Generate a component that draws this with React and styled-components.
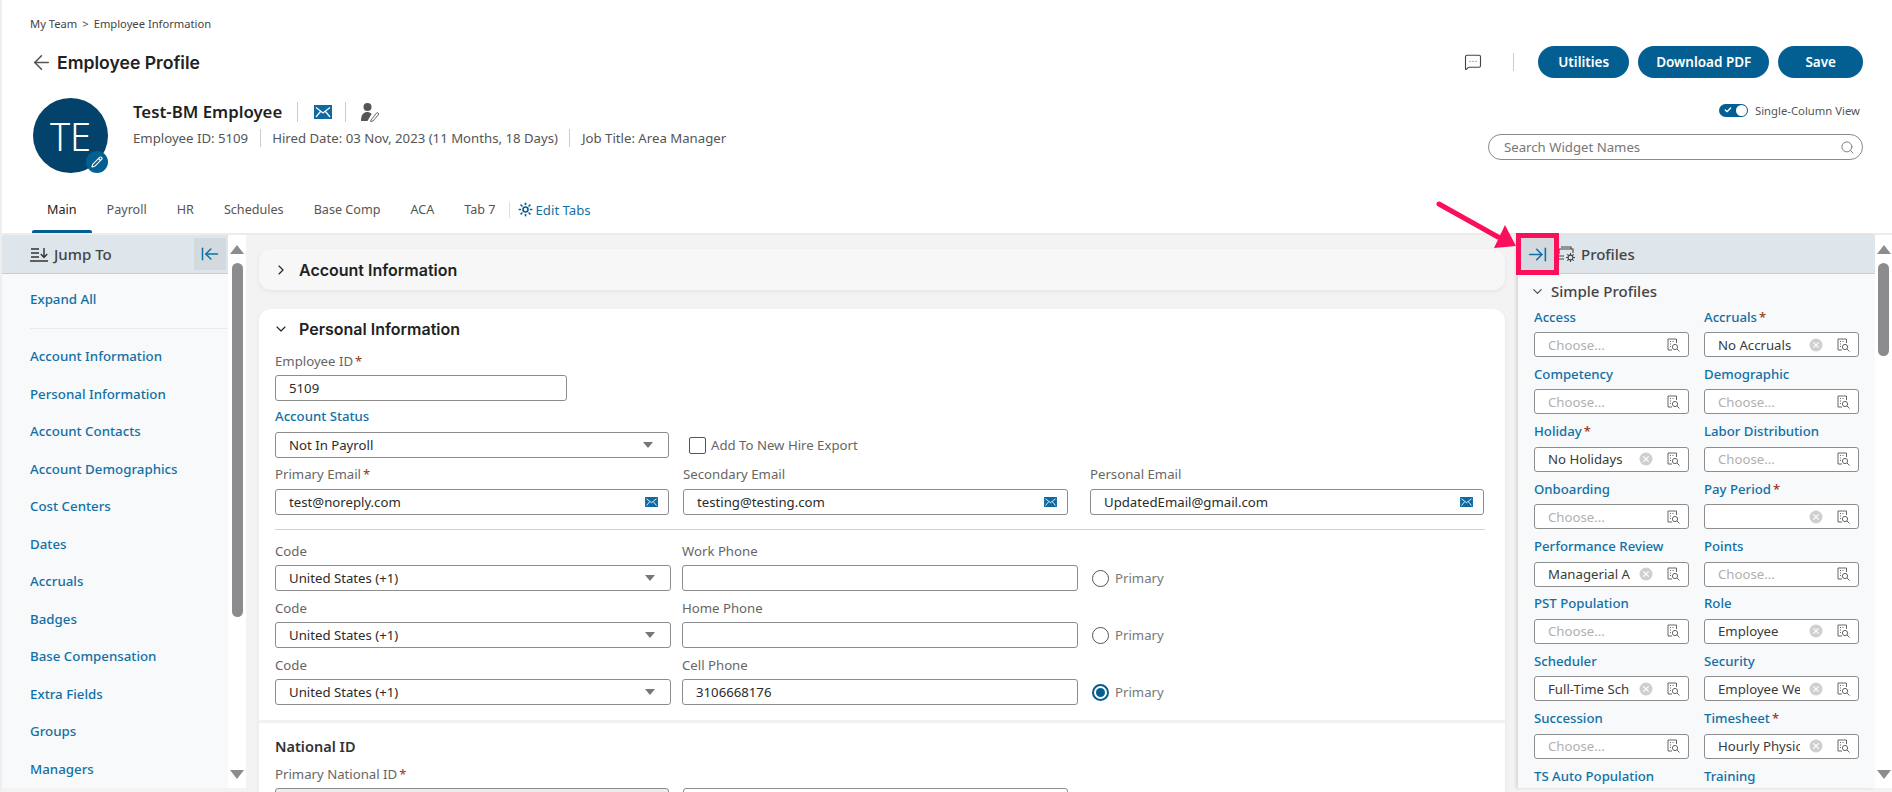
import React from "react";
import styled, { createGlobalStyle } from "styled-components";
import {
  ArrowLeft,
  ArrowLeftToLine,
  ArrowRightToLine,
  ChevronDown,
  ChevronRight,
  MessageSquareMore,
  Search,
  Pencil,
  Check,
  Sun,
} from "lucide-react";

const GlobalStyle = createGlobalStyle`
  html, body {
    margin: 0;
    padding: 0;
    background: #fff;
    overflow: hidden;
  }
  * { box-sizing: border-box; }
  body {
    font-family: "Noto Sans", "Open Sans", sans-serif;
    color: #3d3d3d;
  }
`;

const blue = "#035f92";
const link = "#1270a5";

const Page = styled.div`
  position: relative;
  width: 1892px;
  height: 792px;
  overflow: hidden;
  display: flex;
  flex-direction: column;
  border-left: 2px solid #eeeeee;
`;

const Header = styled.header`
  height: 235px;
  flex: none;
  padding: 15px 29px 0 28px;
  display: flex;
  flex-direction: column;
  border-bottom: 2px solid #ececec;
`;

const Breadcrumb = styled.div`
  font-size: 11.2px;
  line-height: 18px;
  color: #444;
  span { margin: 0 5px; }
`;

const TitleRow = styled.div`
  display: flex;
  align-items: center;
  justify-content: space-between;
  height: 32px;
  margin-top: 13px;
`;

const TitleLeft = styled.div`
  display: flex;
  align-items: center;
  gap: 4px;
  color: #555;
`;

const Title = styled.h1`
  margin: 0;
  font-family: "Inter", sans-serif;
  font-size: 17.6px;
  font-weight: 600;
  color: #222;
`;

const Actions = styled.div`
  display: flex;
  align-items: center;
  gap: 9px;
`;

const CommentButton = styled.div`
  display: flex;
  align-items: center;
  color: #444;
  padding-right: 31px;
  margin-right: 15px;
  border-right: 1px solid #ccc;
  height: 18px;
`;

const PillButton = styled.button`
  height: 32px;
  padding: 0 ${(p) => p.$pad}px;
  border: 0;
  border-radius: 16px;
  background: ${blue};
  color: #fff;
  font-family: "Noto Sans", sans-serif;
  font-size: 13.5px;
  font-weight: 600;
`;

const ProfileRow = styled.div`
  display: flex;
  justify-content: space-between;
  margin-top: 20px;
  height: 85px;
`;

const ProfileLeft = styled.div`
  display: flex;
  padding-left: 3px;
  gap: 25px;
`;

const Avatar = styled.div`
  position: relative;
  width: 75px;
  height: 75px;
  border-radius: 50%;
  background: #03426a;
  color: #fff;
  display: flex;
  align-items: center;
  justify-content: center;
  font-family: "Noto Sans", sans-serif;
  font-size: 38px;
  font-weight: 300;
`;

const AvatarBadge = styled.div`
  position: absolute;
  right: 0;
  bottom: 0;
  width: 22px;
  height: 22px;
  border-radius: 50%;
  background: ${blue};
  display: flex;
  align-items: center;
  justify-content: center;
`;

const NameLine = styled.div`
  display: flex;
  align-items: center;
  height: 22px;
  margin-top: 3px;
`;

const Name = styled.div`
  font-size: 16.8px;
  font-weight: 600;
  color: #1f1f1f;
  padding-right: 15px;
  border-right: 1px solid #ccc;
  line-height: 20px;
`;

const NameIcon = styled.div`
  display: flex;
  align-items: center;
  height: 20px;
  padding: 0 13px 0 ${(p) => p.$left}px;
  ${(p) => p.$divider && "border-right: 1px solid #ccc;"}
`;

const MetaLine = styled.div`
  display: flex;
  margin-top: 6px;
  font-size: 13.2px;
  color: #555;
  line-height: 18px;
`;

const MetaItem = styled.div`
  padding: 0 11.5px;
  border-left: 1px solid #ccc;
  &:first-child { padding-left: 0; border-left: 0; }
`;

const ProfileRight = styled.div`
  width: 375px;
  display: flex;
  flex-direction: column;
  align-items: flex-end;
`;

const ToggleRow = styled.div`
  display: flex;
  align-items: center;
  gap: 7px;
  font-size: 11.3px;
  color: #555;
  height: 16px;
  margin-top: 4px;
  padding-right: 3px;
`;

const Toggle = styled.div`
  width: 29px;
  height: 13px;
  border-radius: 7px;
  background: ${blue};
  display: flex;
  align-items: center;
  justify-content: space-between;
  padding: 0 1px 0 5px;
  &::after {
    content: "";
    width: 11px;
    height: 11px;
    border-radius: 50%;
    background: #fff;
  }
`;

const SearchBox = styled.div`
  width: 100%;
  height: 26px;
  margin-top: 16px;
  border: 1px solid #8a8a8a;
  border-radius: 13px;
  display: flex;
  align-items: center;
  justify-content: space-between;
  padding: 0 7px 0 15px;
  font-size: 13.2px;
  color: #777;
`;

const Tabs = styled.nav`
  display: flex;
  align-items: center;
  height: 42px;
  margin-top: 9px;
  padding-left: 2px;
`;

const Tab = styled.div`
  position: relative;
  height: 100%;
  display: flex;
  align-items: center;
  padding: 0 ${(p) => p.$pad || 15}px 5px 15px;
  font-size: 12.6px;
  color: ${(p) => (p.$active ? "#222" : "#555")};
  ${(p) =>
    p.$active &&
    `&::after {
      content: "";
      position: absolute;
      left: 0;
      right: 0;
      bottom: 0;
      height: 3px;
      border-radius: 2px 2px 0 0;
      background: ${blue};
    }`}
`;

const EditTabs = styled.div`
  display: flex;
  align-items: center;
  gap: 3px;
  height: 16px;
  margin-bottom: 5px;
  padding-left: 8px;
  border-left: 1px solid #ddd;
  font-size: 13.2px;
  color: ${link};
`;

const Body = styled.div`
  flex: 1;
  min-height: 0;
  display: flex;
  align-items: flex-start;
  background: #f3f3f3;
`;

const SidePanel = styled.aside`
  width: ${(p) => p.$width}px;
  height: 553px;
  flex: none;
  background: #f7f9fb;
  overflow: hidden;
  ${(p) => p.$shadow && "box-shadow: -2px 0 3px rgba(0,0,0,.12);"}
`;

const PanelHead = styled.div`
  height: 39px;
  background: #dee5eb;
  border-bottom: 1px solid #c9ced3;
  display: flex;
  align-items: center;
  font-size: 15px;
  font-weight: 500;
  color: #444;
`;

const JumpLabel = styled.div`
  flex: 1;
  display: flex;
  align-items: center;
  gap: 6px;
  padding-left: 28px;
`;

const CollapseButton = styled.div`
  width: 32px;
  height: 32px;
  margin-right: 2px;
  background: #d2dadf;
  display: flex;
  align-items: center;
  justify-content: center;
  color: ${link};
`;

const NavList = styled.div`
  padding: 6px 0 0 28px;
`;

const NavLink = styled.div`
  height: 37.5px;
  display: flex;
  align-items: center;
  font-size: 13.3px;
  font-weight: 500;
  color: ${link};
`;

const NavDivider = styled.div`
  height: 1px;
  background: #e8eaec;
  margin: 10px 0 9px;
`;

const Scrollbar = styled.div`
  width: ${(p) => p.$width}px;
  flex: none;
  background: #fff;
  display: flex;
  flex-direction: column;
  align-items: center;
  padding-top: 10px;
  height: 553px;
`;

const UpArrow = styled.div`
  width: 0;
  height: 0;
  border-left: 7px solid transparent;
  border-right: 7px solid transparent;
  border-bottom: 9px solid #8c8c8e;
`;

const DownArrow = styled.div`
  width: 0;
  height: 0;
  margin-top: auto;
  margin-bottom: 9px;
  border-left: 7px solid transparent;
  border-right: 7px solid transparent;
  border-top: 9px solid #8c8c8e;
`;

const Thumb = styled.div`
  width: 11px;
  height: ${(p) => p.$height}px;
  margin-top: 9px;
  border-radius: 6px;
  background: #8c8c8e;
`;

const Main = styled.main`
  flex: 1;
  min-width: 0;
  height: 557px;
  padding: 14px 13px 0 13px;
  overflow: hidden;
`;

const Card = styled.section`
  background: ${(p) => (p.$collapsed ? "#f7f7f7" : "#fff")};
  border-radius: 12px;
  box-shadow: 0 2px 5px rgba(0, 0, 0, 0.06);
  margin-bottom: 19px;
`;

const CardHead = styled.div`
  display: flex;
  align-items: center;
  gap: 10px;
  height: ${(p) => p.$height}px;
  padding: 0 0 ${(p) => p.$bottom || 0}px 14px;
  font-family: "Inter", sans-serif;
  font-size: 16px;
  font-weight: 600;
  color: #222;
`;

const CardBody = styled.div`
  padding: 0 20px 0 16px;
`;

const Row = styled.div`
  display: flex;
  align-items: flex-end;
  gap: ${(p) => p.$gap ?? 14}px;
  margin-top: ${(p) => p.$top || 0}px;
`;

const Field = styled.div`
  width: ${(p) => p.$width}px;
  flex: none;
  margin-right: ${(p) => p.$right || 0}px;
`;

const Label = styled.div`
  height: ${(p) => p.$height || 22}px;
  margin-bottom: ${(p) => p.$below ?? 3}px;
  font-size: 13.2px;
  font-weight: ${(p) => (p.$blue ? 500 : 400)};
  color: ${(p) => (p.$blue ? link : "#666")};
  display: flex;
  align-items: center;
  gap: 2px;
`;

const Star = styled.span`
  color: #9a3412;
  font-size: 13px;
`;

const InputBox = styled.div`
  height: ${(p) => p.$height || 26}px;
  border: 1px solid #8d8d8d;
  border-radius: 3px;
  background: ${(p) => (p.$disabled ? "#ececec" : "#fff")};
  display: flex;
  align-items: center;
  padding: 0 10px 0 13px;
  font-size: 13.2px;
  color: #2b2b2b;
`;

const BoxText = styled.div`
  flex: 1;
  min-width: 0;
  overflow: hidden;
  white-space: nowrap;
`;

const Caret = styled.div`
  width: 0;
  height: 0;
  margin-right: 5px;
  border-left: 5px solid transparent;
  border-right: 5px solid transparent;
  border-top: 6px solid #777;
`;

const CheckWrap = styled.div`
  display: flex;
  align-items: center;
  gap: 5px;
  height: 26px;
  font-size: 13.2px;
  color: #666;
`;

const CheckBox = styled.div`
  width: 17px;
  height: 17px;
  border: 1.5px solid #555;
  border-radius: 2px;
`;

const RadioWrap = styled.div`
  display: flex;
  align-items: center;
  gap: 6px;
  height: 26px;
  font-size: 13.2px;
  color: #777;
  margin-left: 3px;
`;

const Radio = styled.div`
  width: 17px;
  height: 17px;
  border-radius: 50%;
  border: ${(p) => (p.$on ? `2px solid ${blue}` : "1.5px solid #555")};
  display: flex;
  align-items: center;
  justify-content: center;
  &::after {
    content: "";
    width: 9px;
    height: 9px;
    border-radius: 50%;
    background: ${(p) => (p.$on ? blue : "transparent")};
  }
`;

const ThinRule = styled.div`
  height: 1px;
  background: #cfcfcf;
  margin: 14px 0 9px;
`;

const SectionBreak = styled.div`
  height: 3px;
  background: #f1f1f1;
  margin: 15px -20px 0 -16px;
`;

const SubTitle = styled.div`
  margin-top: 12px;
  font-size: 14.5px;
  font-weight: 600;
  color: #333;
  line-height: 22px;
`;

const ProfilesLabel = styled.div`
  display: flex;
  align-items: center;
  gap: 5px;
  padding-left: 8px;
`;

const ToggleEdge = styled.div`
  width: 32px;
  height: 36px;
  flex: none;
`;

const SimpleHead = styled.div`
  display: flex;
  align-items: center;
  gap: 6px;
  height: 22px;
  margin-top: 6px;
  padding-left: 12px;
  font-size: 15px;
  font-weight: 500;
  color: #444;
`;

const ProfileGrid = styled.div`
  display: grid;
  grid-template-columns: 155px 155px;
  column-gap: 15px;
  row-gap: 3.4px;
  padding: 1px 0 0 16px;
`;

const ProfileCell = styled.div``;

const Lookup = styled.div`
  height: 25px;
  border: 1px solid #8d8d8d;
  border-radius: 3px;
  background: #fff;
  display: flex;
  align-items: center;
  padding: 0 8px 0 13px;
  font-size: 13.2px;
  color: #3a3a3a;
`;

const LookupValue = styled.div`
  flex: 1;
  min-width: 0;
  overflow: hidden;
  white-space: nowrap;
  margin-right: 9px;
  color: ${(p) => (p.$empty ? "#b0b0b0" : "#3a3a3a")};
`;

const LookupIcons = styled.div`
  display: flex;
  align-items: center;
  gap: 14px;
  flex: none;
`;

const Annotation = styled.div`
  position: absolute;
  left: 1514px;
  top: 233px;
  width: 43px;
  height: 42px;
  border: 5px solid #fb0f5a;
  background: #d2dadf;
  display: flex;
  align-items: center;
  justify-content: center;
  color: ${link};
`;

const AnnotationArrow = styled.svg`
  position: absolute;
  left: 1430px;
  top: 198px;
`;

const MailIcon = ({ size = 18, h = 14 }) => (
  <svg width={size} height={h} viewBox="0 0 18 14">
    <rect width="18" height="14" fill="#0d6aa3" />
    <path d="M2 2.5 L9 8 L16 2.5 M2 12 L6.5 6.5 M16 12 L11.5 6.5" stroke="#fff" strokeWidth="1.2" fill="none" />
  </svg>
);

const PersonEdit = () => (
  <svg width="20" height="20" viewBox="0 0 20 20">
    <circle cx="7.5" cy="5" r="4" fill="#555" />
    <path d="M1 19 C1 12 4 10 7.5 10 C9.5 10 11 11 11.5 12 L7.5 19 Z" fill="#555" />
    <path d="M11 18 L17 10.5 L19 12 L13 19 L10.5 19.5 Z" fill="#fff" stroke="#666" strokeWidth="1" />
  </svg>
);

const JumpIcon = () => (
  <svg width="18" height="15" viewBox="0 0 18 15" fill="none" stroke="#333" strokeWidth="1.4">
    <path d="M1 2 H9 M1 6 H9 M1 10 H9 M0 14 H18" />
    <path d="M14 1 V10 M10.8 7 L14 10.5 L17.2 7" />
  </svg>
);

const ProfilesIcon = () => (
  <svg width="18" height="17" viewBox="0 0 18 17" fill="none" stroke="#444" strokeWidth="1.1">
    <path d="M3 1 H13 V3 M1 3 H15 V7 M1 3 V8 M1 10 H6 M1 13 H6" />
    <circle cx="12.5" cy="11.5" r="2.4" />
    <path d="M12.5 7 V9 M12.5 14 V16 M8 11.5 H10 M15 11.5 H17 M9.3 8.3 L10.7 9.7 M14.3 13.3 L15.7 14.7 M9.3 14.7 L10.7 13.3 M14.3 9.7 L15.7 8.3" />
  </svg>
);

const ClearIcon = () => (
  <svg width="14" height="14" viewBox="0 0 14 14">
    <circle cx="7" cy="7" r="6.5" fill="#cfcfcf" />
    <path d="M4.3 4.3 L9.7 9.7 M9.7 4.3 L4.3 9.7" stroke="#fff" strokeWidth="1.2" />
  </svg>
);

const LookupIcon = () => (
  <svg width="13" height="14" viewBox="0 0 13 14" fill="none" stroke="#666" strokeWidth="1">
    <path d="M9.5 5 V1 H1 V12 H5" />
    <path d="M3 3.5 H4 M5.5 3.5 H6.5 M3 6 H4 M3 8.5 H4" />
    <circle cx="8" cy="9" r="2.6" />
    <path d="M10 11 L12.5 13.5" />
  </svg>
);

const navItems = [
  "Account Information",
  "Personal Information",
  "Account Contacts",
  "Account Demographics",
  "Cost Centers",
  "Dates",
  "Accruals",
  "Badges",
  "Base Compensation",
  "Extra Fields",
  "Groups",
  "Managers",
];

const profiles = [
  { label: "Access" },
  { label: "Accruals", required: true, value: "No Accruals", clear: true },
  { label: "Competency" },
  { label: "Demographic" },
  { label: "Holiday", required: true, value: "No Holidays", clear: true },
  { label: "Labor Distribution" },
  { label: "Onboarding" },
  { label: "Pay Period", required: true, value: " ", clear: true },
  { label: "Performance Review", value: "Managerial Assessment", clear: true },
  { label: "Points" },
  { label: "PST Population" },
  { label: "Role", value: "Employee", clear: true },
  { label: "Scheduler", value: "Full-Time Schedule", clear: true },
  { label: "Security", value: "Employee Web Access", clear: true },
  { label: "Succession" },
  { label: "Timesheet", required: true, value: "Hourly Physician", clear: true },
  { label: "TS Auto Population" },
  { label: "Training" },
];

const phones = [
  { label: "Work Phone", value: "" },
  { label: "Home Phone", value: "" },
  { label: "Cell Phone", value: "3106668176", primary: true },
];

const emails = [
  { label: "Primary Email", value: "test@noreply.com", required: true, width: 394 },
  { label: "Secondary Email", value: "testing@testing.com", width: 385, right: 8 },
  { label: "Personal Email", value: "UpdatedEmail@gmail.com", width: 394 },
];

export default function App() {
  return (
    <Page>
      <GlobalStyle />
      <Header>
        <Breadcrumb>
          My Team<span>&gt;</span>Employee Information
        </Breadcrumb>
        <TitleRow>
          <TitleLeft>
            <ArrowLeft size={23} strokeWidth={1.7} />
            <Title>Employee Profile</Title>
          </TitleLeft>
          <Actions>
            <CommentButton>
              <MessageSquareMore size={18} strokeWidth={1.5} />
            </CommentButton>
            <PillButton $pad={20}>Utilities</PillButton>
            <PillButton $pad={18}>Download PDF</PillButton>
            <PillButton $pad={27}>Save</PillButton>
          </Actions>
        </TitleRow>
        <ProfileRow>
          <ProfileLeft>
            <Avatar>
              TE
              <AvatarBadge>
                <Pencil size={12} color="#fff" strokeWidth={2.2} />
              </AvatarBadge>
            </Avatar>
            <div>
              <NameLine>
                <Name>Test-BM Employee</Name>
                <NameIcon $left={16} $divider>
                  <MailIcon />
                </NameIcon>
                <NameIcon $left={14}>
                  <PersonEdit />
                </NameIcon>
              </NameLine>
              <MetaLine>
                <MetaItem>Employee ID: 5109</MetaItem>
                <MetaItem>Hired Date: 03 Nov, 2023 (11 Months, 18 Days)</MetaItem>
                <MetaItem>Job Title: Area Manager</MetaItem>
              </MetaLine>
            </div>
          </ProfileLeft>
          <ProfileRight>
            <ToggleRow>
              <Toggle>
                <Check size={8} color="#fff" strokeWidth={4} />
              </Toggle>
              Single-Column View
            </ToggleRow>
            <SearchBox>
              Search Widget Names
              <Search size={15} color="#777" strokeWidth={1.5} />
            </SearchBox>
          </ProfileRight>
        </ProfileRow>
        <Tabs>
          <Tab $active>Main</Tab>
          <Tab>Payroll</Tab>
          <Tab>HR</Tab>
          <Tab>Schedules</Tab>
          <Tab>Base Comp</Tab>
          <Tab>ACA</Tab>
          <Tab $pad={13}>Tab 7</Tab>
          <EditTabs>
            <Sun size={15} color={blue} strokeWidth={2.6} />
            Edit Tabs
          </EditTabs>
        </Tabs>
      </Header>

      <Body>
        <SidePanel $width={226}>
          <PanelHead>
            <JumpLabel>
              <JumpIcon />
              Jump To
            </JumpLabel>
            <CollapseButton>
              <ArrowLeftToLine size={20} strokeWidth={1.8} />
            </CollapseButton>
          </PanelHead>
          <NavList>
            <NavLink>Expand All</NavLink>
            <NavDivider />
            {navItems.map((item) => (
              <NavLink key={item}>{item}</NavLink>
            ))}
          </NavList>
        </SidePanel>
        <Scrollbar $width={18}>
          <UpArrow />
          <Thumb $height={354} />
          <DownArrow />
        </Scrollbar>

        <Main>
          <Card $collapsed>
            <CardHead $height={41}>
              <ChevronRight size={16} strokeWidth={1.7} />
              Account Information
            </CardHead>
          </Card>
          <Card>
            <CardHead $height={41} $bottom={2}>
              <ChevronDown size={16} strokeWidth={1.7} />
              Personal Information
            </CardHead>
            <CardBody>
              <Field $width={292}>
                <Label>
                  Employee ID<Star>*</Star>
                </Label>
                <InputBox>5109</InputBox>
              </Field>
              <Row $gap={20}>
                <Field $width={394}>
                  <Label $blue $height={29} $below={2}>Account Status</Label>
                  <InputBox>
                    <BoxText>Not In Payroll</BoxText>
                    <Caret />
                  </InputBox>
                </Field>
                <CheckWrap>
                  <CheckBox />
                  Add To New Hire Export
                </CheckWrap>
              </Row>
              <Row>
                {emails.map((e) => (
                  <Field $width={e.width} $right={e.right} key={e.label}>
                    <Label $height={31} $below={0}>
                      {e.label}
                      {e.required && <Star>*</Star>}
                    </Label>
                    <InputBox>
                      <BoxText>{e.value}</BoxText>
                      <MailIcon size={13} h={10} />
                    </InputBox>
                  </Field>
                ))}
              </Row>
              <ThinRule />
              {phones.map((p, i) => (
                <Row key={p.label} $gap={11} $top={i ? 5 : 0}>
                  <Field $width={396}>
                    <Label $height={24} $below={2}>Code</Label>
                    <InputBox>
                      <BoxText>United States (+1)</BoxText>
                      <Caret />
                    </InputBox>
                  </Field>
                  <Field $width={396}>
                    <Label $height={24} $below={2}>{p.label}</Label>
                    <InputBox>{p.value}</InputBox>
                  </Field>
                  <RadioWrap>
                    <Radio $on={p.primary} />
                    Primary
                  </RadioWrap>
                </Row>
              ))}
              <SectionBreak />
              <SubTitle>National ID</SubTitle>
              <Row $top={6}>
                <Field $width={394}>
                  <Label>
                    Primary National ID<Star>*</Star>
                  </Label>
                  <InputBox $disabled />
                </Field>
                <Field $width={385}>
                  <Label />
                  <InputBox />
                </Field>
              </Row>
            </CardBody>
          </Card>
        </Main>

        <SidePanel $width={357} $shadow>
          <PanelHead>
            <ToggleEdge />
            <ProfilesLabel>
              <ProfilesIcon />
              Profiles
            </ProfilesLabel>
          </PanelHead>
          <SimpleHead>
            <ChevronDown size={15} strokeWidth={1.7} />
            Simple Profiles
          </SimpleHead>
          <ProfileGrid>
            {profiles.map((f) => (
              <ProfileCell key={f.label}>
                <Label $blue $height={27} $below={2}>
                  {f.label}
                  {f.required && <Star>*</Star>}
                </Label>
                <Lookup>
                  <LookupValue $empty={!f.value}>{f.value || "Choose..."}</LookupValue>
                  <LookupIcons>
                    {f.clear && <ClearIcon />}
                    <LookupIcon />
                  </LookupIcons>
                </Lookup>
              </ProfileCell>
            ))}
          </ProfileGrid>
        </SidePanel>
        <Scrollbar $width={17}>
          <UpArrow />
          <Thumb $height={93} />
          <DownArrow />
        </Scrollbar>
      </Body>

      <AnnotationArrow width="90" height="60" viewBox="0 0 90 60">
        <path d="M7 6 L66 39" stroke="#fb0f5a" strokeWidth="5" strokeLinecap="round" />
        <path d="M84 48 L62 50 L73 27 Z" fill="#fb0f5a" />
      </AnnotationArrow>
      <Annotation>
        <ArrowRightToLine size={21} strokeWidth={1.8} />
      </Annotation>
    </Page>
  );
}
